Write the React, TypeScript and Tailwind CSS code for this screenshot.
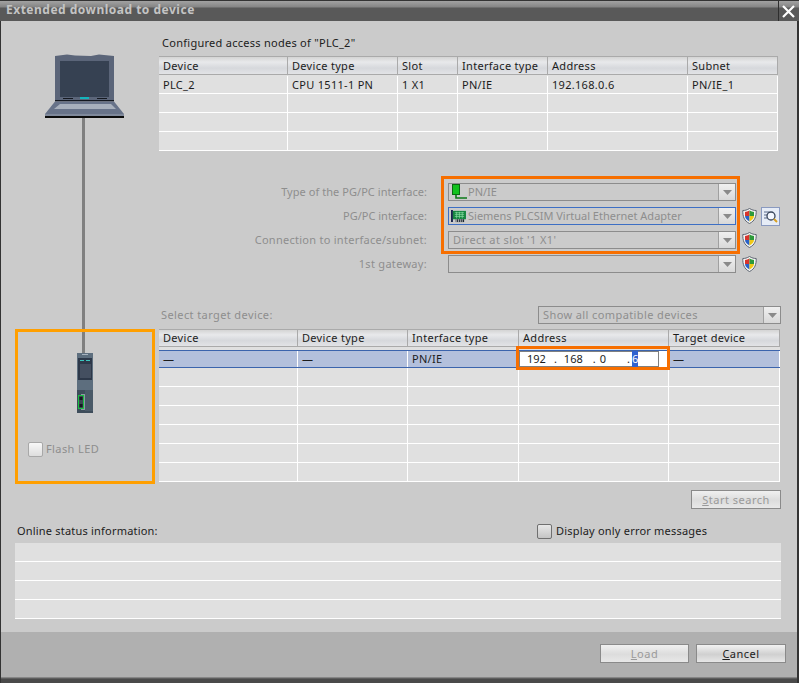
import type { ReactNode } from 'react';

const fontClassName = "font-['Noto_Sans','Liberation_Sans',sans-serif]";
const headerClassName =
  'flex items-center border-y border-r border-[#aaaaaa] bg-[linear-gradient(#d4d4d4,#e8e9eb_30%,#d6d8dc_65%,#e2e3e6)] pl-[4px] tracking-[0.3px] text-[#1c1c1c]';

type RowCell = ReactNode;

function ShieldIcon() {
  return (
    <svg className="shrink-0" width="15" height="16" viewBox="0 0 15 16">
      <path d="M7.5.5 C5 2 3 2.5.8 2.5 C.6 8 2 13 7.5 15.5 C13 13 14.4 8 14.2 2.5 C12 2.5 10 2 7.5.5Z" fill="#f4f4f4" stroke="#5c6470" />
      <path d="M7.5 2.5 C6 3.4 4.5 3.8 3 3.9 L3 8 L7.5 8Z" fill="#d8342c" />
      <path d="M7.5 2.5 C9 3.4 10.5 3.8 12 3.9 L12 8 L7.5 8Z" fill="#2e9a3a" />
      <path d="M3 8 L7.5 8 L7.5 13.4 C4.6 12 3.3 10.5 3 8Z" fill="#2a62c8" />
      <path d="M12 8 L7.5 8 L7.5 13.4 C10.4 12 11.7 10.5 12 8Z" fill="#f0c814" />
    </svg>
  );
}

function NetworkIcon() {
  return (
    <svg className="absolute left-[3px] top-0" width="16" height="16" viewBox="0 0 16 16">
      <rect x="0.5" y="0.5" width="7" height="10" fill="#12c21e" stroke="#0a6a12" />
      <path d="M4 11v3h11" fill="none" stroke="#0c7a18" strokeWidth="1.6" />
    </svg>
  );
}

function AdapterIcon() {
  return (
    <svg className="absolute left-[2px] top-[1px]" width="15" height="14" viewBox="0 0 16 15">
      <path d="M0 1h2v13H0z" fill="#14204a" />
      <rect x="2" y="2" width="14" height="9" fill="#16863f" />
      <path d="M4 4h10M4 6h10M4 8h10M6 3v7M9 3v7M12 3v7" stroke="#8fe0a8" strokeWidth="0.7" />
      <rect x="5" y="11" width="9" height="3" fill="#1c2630" />
      <path d="M6 11v3M8 11v3M10 11v3M12 11v3" stroke="#e8e8e8" strokeWidth="0.7" />
    </svg>
  );
}

function ComboArrow() {
  return (
    <div className="flex h-full w-[17px] shrink-0 items-center justify-center border-l border-[#a0a0a0] bg-[linear-gradient(#f0f0f0,#d8d8d8)]">
      <svg width="9" height="5" viewBox="0 0 9 5">
        <path d="M0 0h9L4.5 5z" fill="#8a8a8a" />
      </svg>
    </div>
  );
}

function LaptopIcon() {
  return (
    <svg width="79" height="64" viewBox="0 0 79 64">
      <path d="M10 2 L22 0.5 L30 1.5 L46 2 L54 0.5 L69 2 V47 H10Z" fill="#5b6579" />
      <rect x="15" y="7" width="49" height="36" fill="#364152" />
      <rect x="10" y="46" width="59" height="1.5" fill="#14181f" />
      <rect x="35" y="43" width="9" height="2" fill="#14b4bc" />
      <rect x="18" y="44" width="10" height="1" fill="#14181f" />
      <rect x="52" y="44" width="10" height="1" fill="#14181f" />
      <path d="M10 47.5 H69 L79 60 H0Z" fill="#687389" />
      <path d="M15 50 H66 L71 55 H9Z" fill="#a8b0bc" />
      <rect x="0" y="60" width="79" height="2" fill="#7f899b" />
      <rect x="0" y="62" width="79" height="2" fill="#0c0c0c" />
    </svg>
  );
}

function DeviceIcon() {
  return (
    <svg width="16" height="60" viewBox="0 0 16 60">
      <rect width="16" height="60" fill="#5d6e7e" />
      <rect x="1" y="5" width="14" height="22" fill="#2d3849" />
      <rect x="3" y="11" width="11" height="14" fill="#444f60" />
      <rect x="3" y="7" width="4" height="1" fill="#3cc8c0" />
      <rect x="9" y="7" width="4" height="1" fill="#3cc8c0" />
      <rect x="5" y="1" width="6" height="1" fill="#a8b4c0" />
      <rect x="0" y="37" width="16" height="23" fill="#3e4d5b" />
      <rect x="8" y="37" width="8" height="21" fill="#4a5a68" />
      <rect x="4" y="41" width="4" height="16" fill="#8c98a4" />
      <rect x="1.5" y="42.5" width="5" height="13" fill="#3a4652" stroke="#18c040" />
      <rect x="2.5" y="44" width="3" height="3" fill="#14181f" />
      <rect x="2.5" y="51" width="3" height="3" fill="#14181f" />
    </svg>
  );
}

function Combo({ text, icon, active, textClassName }: { text?: string; icon?: ReactNode; active?: boolean; textClassName?: string }) {
  return (
    <div className={`flex h-[18px] w-full items-center justify-between border ${active ? 'border-[#3d6fc4]' : 'border-[#8c8c8c]'}`}>
      <div className={`relative flex h-full items-center whitespace-nowrap text-[#8e8e8e] ${textClassName ?? ''}`}>
        {icon}
        {text}
      </div>
      <ComboArrow />
    </div>
  );
}

function FormRow({ label, labelClassName, children, extra }: { label: string; labelClassName: string; children: ReactNode; extra?: ReactNode }) {
  return (
    <div className="flex h-[18px] items-center">
      <div className={`w-[268px] whitespace-nowrap text-right text-[#8e8e8e] ${labelClassName}`}>{label}</div>
      <div className="ml-[21px] w-[288px]">{children}</div>
      {extra}
    </div>
  );
}

function TableRow({ cells, columnsClassName, rowClassName }: { cells: RowCell[]; columnsClassName: string; rowClassName: string }) {
  return (
    <div className={`grid ${columnsClassName} ${rowClassName}`}>
      {cells.map((cell, index) => (
        <div className="flex items-center overflow-hidden whitespace-nowrap border-r border-white pl-[4px] tracking-[0.3px] text-[#1c1c1c]" key={index}>
          {cell}
        </div>
      ))}
    </div>
  );
}

function Button({ label, hotkey, enabled, className }: { label: string; hotkey: string; enabled?: boolean; className: string }) {
  const rest = label.slice(hotkey.length);
  return (
    <div
      className={`flex h-[19px] items-center justify-center border border-[#8a8a8a] tracking-[0.5px] ${
        enabled ? 'text-[#1c1c1c] bg-[linear-gradient(#f2f2f2,#d0d0d0_55%,#e6e6e6)]' : 'text-[#9a9a9a] bg-[linear-gradient(#f0f0f0,#dcdcdc_55%,#e8e8e8)]'
      } ${className}`}
    >
      <span className="underline">{hotkey}</span>
      {rest}
    </div>
  );
}

const topColumns = 'grid-cols-[129px_110px_60px_90px_140px_90px]';
const targetColumns = 'grid-cols-[139px_110px_111px_150px_111px]';
const topHeaders = ['Device', 'Device type', 'Slot', 'Interface type', 'Address', 'Subnet'];
const targetHeaders = ['Device', 'Device type', 'Interface type', 'Address', 'Target device'];

export default function App() {
  return (
    <div className={`relative flex h-[684px] w-[799px] flex-col bg-white pb-px text-[11px] leading-4 ${fontClassName}`}>
      <div className="flex h-[21px] shrink-0 justify-between border-t border-[#333333] bg-[linear-gradient(#a2a2a2,#858585_6px,#595959_7px)] pr-[2px]">
        <div className="pl-[6px] pt-[1px] text-[12px] font-bold tracking-[0.5px] text-[#c4c4c4]">Extended download to device</div>
        <div className="flex h-full w-[19px] items-center justify-center border-l border-[#2e2e2e]">
          <svg width="13" height="13" viewBox="0 0 13 13">
            <path d="M1 1l11 11M12 1L1 12" stroke="#ffffff" strokeWidth="2.2" />
          </svg>
        </div>
      </div>

      <div className="flex min-h-0 flex-1 flex-col border-x border-r-2 border-[#333333]">
        <div className="flex h-[611px] flex-col bg-[#cbcbcb]">
          <div className="flex h-[489px]">
            <div className="flex w-[158px] shrink-0 flex-col pl-[44px] pt-[33px]">
              <LaptopIcon />
              <div className="ml-[37px] h-[235px] w-[3px] bg-[#808080]" />
              <div className="ml-[32px]">
                <DeviceIcon />
              </div>
              <div className="-ml-[17px] mt-[28px] flex items-center text-[#8e8e8e]">
                <div className="h-[15px] w-[15px] rounded-[2px] border border-[#a8a8a8] bg-[linear-gradient(#f8f8f8,#dedede)]" />
                <span className="ml-[3px] tracking-[0.4px]">Flash LED</span>
              </div>
            </div>

            <div className="w-[622px] shrink-0">
              <div className="ml-[3px] h-[35px] pt-[14px] tracking-[0.27px] text-[#1c1c1c]">Configured access nodes of "PLC_2"</div>

              <div className="w-[619px]">
                <div className={`grid h-[19px] ${topColumns}`}>
                  {topHeaders.map((header) => (
                    <div className={headerClassName} key={header}>
                      {header}
                    </div>
                  ))}
                </div>
                <TableRow
                  cells={['PLC_2', 'CPU 1511-1 PN', '1 X1', 'PN/IE', '192.168.0.6', 'PN/IE_1']}
                  columnsClassName={topColumns}
                  rowClassName="h-[19px] border-b border-white bg-[#e0e0e0] pt-px"
                />
                {[0, 1, 2].map((row) => (
                  <TableRow
                    cells={['', '', '', '', '', '']}
                    columnsClassName={topColumns}
                    key={row}
                    rowClassName="h-[19px] border-b border-white bg-[#e0e0e0]"
                  />
                ))}
              </div>

              <div className="mt-[32px] flex flex-col gap-[6px]">
                <FormRow label="Type of the PG/PC interface:" labelClassName="tracking-[0.05px]">
                  <Combo icon={<NetworkIcon />} text="PN/IE" textClassName="pl-[19px]" />
                </FormRow>
                <FormRow
                  extra={
                    <div className="ml-[6px] flex items-center gap-[4px]">
                      <ShieldIcon />
                      <div className="flex h-[19px] w-[19px] items-center justify-center border border-[#8a9ac0] bg-[#e6ecf6]">
                        <svg width="15" height="15" viewBox="0 0 15 15">
                          <path d="M1 3h5M1 6h3M1 9h3" stroke="#5a6a8a" />
                          <circle cx="8" cy="7" r="4" fill="#f4f8ff" stroke="#39465c" strokeWidth="1.3" />
                          <path d="M11 10l3 3" stroke="#d8a020" strokeWidth="2" />
                        </svg>
                      </div>
                    </div>
                  }
                  label="PG/PC interface:"
                  labelClassName="tracking-normal"
                >
                  <Combo active icon={<AdapterIcon />} text="Siemens PLCSIM Virtual Ethernet Adapter" textClassName="pl-[19px]" />
                </FormRow>
                <FormRow extra={<div className="ml-[6px]"><ShieldIcon /></div>} label="Connection to interface/subnet:" labelClassName="tracking-[0.27px]">
                  <Combo text="Direct at slot '1 X1'" textClassName="pl-[4px] tracking-[0.4px]" />
                </FormRow>
                <FormRow extra={<div className="ml-[6px]"><ShieldIcon /></div>} label="1st gateway:" labelClassName="tracking-[0.3px]">
                  <Combo />
                </FormRow>
              </div>

              <div className="mt-[33px] flex h-[18px] items-center justify-between">
                <div className="pl-[2px] tracking-[0.4px] text-[#8e8e8e]">Select target device:</div>
                <div className="w-[243px]">
                  <Combo text="Show all compatible devices" textClassName="pl-[4px] tracking-[0.4px]" />
                </div>
              </div>

              <div className="mt-[5px] w-[621px]">
                <div className={`grid h-[18px] ${targetColumns}`}>
                  {targetHeaders.map((header) => (
                    <div className={headerClassName} key={header}>
                      {header}
                    </div>
                  ))}
                </div>
                <div className="h-[3px] bg-[#e0e0e0]" />
                <TableRow
                  cells={[
                    '—',
                    '—',
                    'PN/IE',
                    <div className="-ml-[4px] flex h-full w-[149px] bg-white pr-[9px]" key="address">
                      <div className="flex h-full w-full items-center border border-[#808080] pl-[7px] tracking-normal text-[#1c1c1c]">
                        <span>192</span>
                        <span className="ml-[8px]">.</span>
                        <span className="ml-[7px]">168</span>
                        <span className="ml-[10px]">.</span>
                        <span className="ml-[4px]">0</span>
                        <span className="ml-[21px]">.</span>
                        <span className="ml-[2px] bg-[#2f62d0] text-white">6</span>
                      </div>
                    </div>,
                    '—',
                  ]}
                  columnsClassName={targetColumns}
                  rowClassName="h-[18px] border-y border-[#3b64ad] bg-[#b3c0dc]"
                />
                {[0, 1, 2, 3, 4, 5].map((row) => (
                  <TableRow
                    cells={['', '', '', '', '']}
                    columnsClassName={targetColumns}
                    key={row}
                    rowClassName="h-[19px] border-b border-white bg-[#e0e0e0]"
                  />
                ))}
              </div>

              <div className="mt-[8px] flex justify-end">
                <Button className="w-[90px]" hotkey="S" label="Start search" />
              </div>
            </div>
          </div>

          <div className="flex h-[33px] items-start pl-[16px] pt-[13px]">
            <div className="w-[520px] tracking-[0.2px] text-[#1c1c1c]">Online status information:</div>
            <div className="flex items-center text-[#1c1c1c]">
              <div className="h-[15px] w-[15px] rounded-[2px] border border-[#707070] bg-[linear-gradient(#e8e8e8,#c4c4c4)]" />
              <span className="ml-[4px] tracking-[0.2px]">Display only error messages</span>
            </div>
          </div>

          <div className="ml-[14px] w-[766px]">
            {[0, 1, 2, 3].map((row) => (
              <div className="h-[19px] border-b border-white bg-[#e0e0e0]" key={row} />
            ))}
          </div>
        </div>

        <div className="flex h-[45px] justify-end gap-[7px] bg-[#b0b0b0] pr-[11px] pt-[12px]">
          <Button className="w-[89px]" hotkey="L" label="Load" />
          <Button className="w-[90px]" enabled hotkey="C" label="Cancel" />
        </div>
        <div className="h-[6px] flex-1 bg-[linear-gradient(#9a9a9a,#4a4a4a_2px)]" />
      </div>

      <div className="pointer-events-none absolute left-[15px] top-[329px] h-[155px] w-[140px] border-[3px] border-[#ff9f00]" />
      <div className="pointer-events-none absolute left-[441px] top-[176px] h-[78px] w-[299px] border-[3px] border-[#f76f00]" />
      <div className="pointer-events-none absolute left-[516px] top-[346px] h-[24px] w-[154px] border-[3px] border-[#f76f00]" />
    </div>
  );
}
